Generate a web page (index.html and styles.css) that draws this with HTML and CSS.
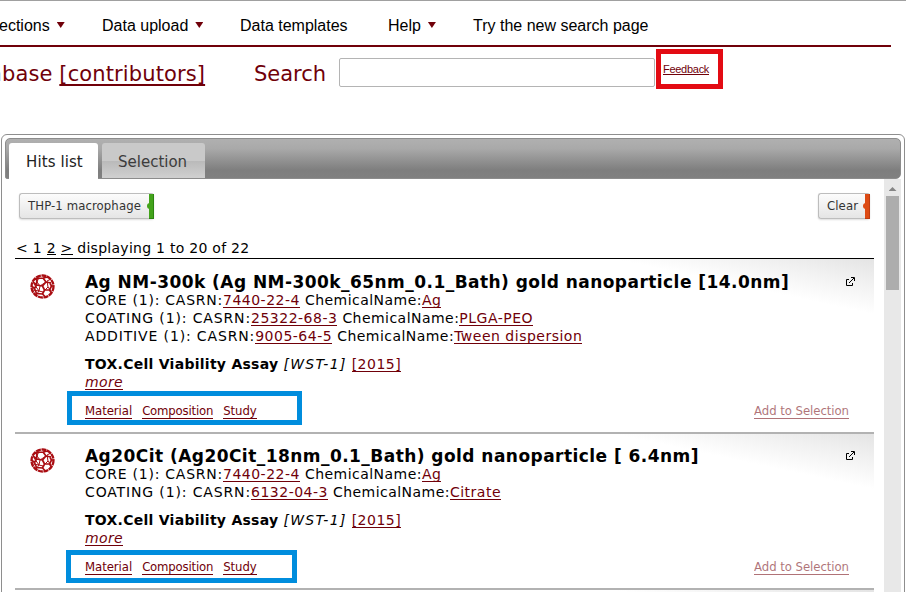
FILE: index.html
```
<!DOCTYPE html>
<html lang="en">
<head>
<meta charset="utf-8">
<title>Search</title>
<link rel="stylesheet" href="styles.css">
</head>
<body>
<svg width="0" height="0" class="defs">
  <symbol id="bucky" viewBox="0 0 25 25">
    <g fill="none" stroke="#a90d12" stroke-linejoin="round">
      <circle cx="12.5" cy="12.5" r="11" stroke-width="2.3" stroke-dasharray="5 .6"/>
      <path stroke-width="1.7" d="M7 4.5 13 4l3 4-3.500 4-6-1zM13 4l5-1M16 8l5 1M12.500 12l2 4 5 0 2-4-2-3.500M14.500 16l-2 4-6-.5-2-5 2-3.500M12.500 20l3 3M19.500 16l2 3M4.500 14.500 1.500 12M6.500 19.500 5 21M6.500 11 3 8M7 4.500 4 6M21.500 12h2"/>
      <path stroke-width="1" d="M9 3l-2 5 3 4-1 5 4 1 5-5-1-6 4-2M4 10l5 7-3 4M18 13l3 4M3 16l6 1M10 12l6-4"/>
    </g>
  </symbol>
  <symbol id="ext" viewBox="0 0 9 9">
    <path fill="none" stroke="#000" d="M3 2.500H.5v6h6V6M3 6l5-5M5 .5h3.500V4"/>
  </symbol>
</svg>

<div class="page">
  <nav class="nav">
    <a class="n1">ections<i></i></a>
    <a class="n2">Data upload<i></i></a>
    <a class="n3">Data templates</a>
    <a class="n4">Help<i></i></a>
    <a>Try the new search page</a>
  </nav>
  <header class="head">
    <div class="brand">abase <u>[contributors]</u></div>
    <label class="label">Search</label>
    <div class="input"></div>
    <div class="feedback"><u>Feedback</u></div>
  </header>

  <main class="panel">
    <div class="tabs">
      <div class="tab active">Hits list</div>
      <div class="tab">Selection</div>
    </div>
    <div class="body">
      <div class="content">
        <div class="filters">
          <div class="pill green">THP-1 macrophage</div>
          <div class="pill red">Clear</div>
        </div>
        <div class="pager">&lt; 1 <u>2</u> <u>&gt;</u> displaying 1 to 20 of 22</div>

        <article class="item first">
          <svg class="bucky"><use href="#bucky"/></svg>
          <div class="info">
            <h2>Ag NM-300k (Ag NM-300k_65nm_0.1_Bath) gold nanoparticle [14.0nm]</h2>
            <div class="row"><b>CORE (1): CASRN:</b><u>7440-22-4</u><span>ChemicalName:</span><u>Ag</u></div>
            <div class="row"><b class="wide">COATING (1): CASRN:</b><u>25322-68-3</u><span>ChemicalName:</span><u>PLGA-PEO</u></div>
            <div class="row"><b class="wide">ADDITIVE (1): CASRN:</b><u>9005-64-5</u><span>ChemicalName:</span><u>Tween dispersion</u></div>
            <div class="study"><strong>TOX.Cell Viability Assay</strong><em>[WST-1]</em><u>[2015]</u></div>
            <div class="more"><u>more</u></div>
            <div class="links"><u>Material</u><u class="comp">Composition</u><u>Study</u><u class="add">Add to Selection</u></div>
          </div>
          <svg class="ext"><use href="#ext"/></svg>
          <div class="mark m1"></div>
        </article>

        <article class="item">
          <svg class="bucky"><use href="#bucky"/></svg>
          <div class="info">
            <h2>Ag20Cit (Ag20Cit_18nm_0.1_Bath) gold nanoparticle [ 6.4nm]</h2>
            <div class="row"><b>CORE (1): CASRN:</b><u>7440-22-4</u><span>ChemicalName:</span><u>Ag</u></div>
            <div class="row"><b class="wide">COATING (1): CASRN:</b><u>6132-04-3</u><span>ChemicalName:</span><u>Citrate</u></div>
            <div class="study"><strong>TOX.Cell Viability Assay</strong><em>[WST-1]</em><u>[2015]</u></div>
            <div class="more"><u>more</u></div>
            <div class="links"><u>Material</u><u class="comp">Composition</u><u>Study</u><u class="add">Add to Selection</u></div>
          </div>
          <svg class="ext"><use href="#ext"/></svg>
          <div class="mark m2"></div>
        </article>
        <article class="item"></article>
      </div>
      <div class="scroll"><span class="up"></span><div class="thumb"></div></div>
    </div>
  </main>
</div>
</body>
</html>
```
FILE: styles.css
```
* { box-sizing: border-box; }
body { margin: 0; background: #fff; overflow: hidden; }
.defs { display: none; }
.page {
  height: 592px;
  overflow: hidden;
  border-top: 1px solid #a0a0a0;
  font-family: "DejaVu Sans", Verdana, sans-serif;
  color: #000;
}
u { color: #700009; text-decoration: none; border-bottom: 1px solid #700009; }

.nav {
  display: flex;
  width: 891px;
  height: 46px;
  padding-top: 16px;
  border-bottom: 2px solid #700009;
  font: 16px/18px "Liberation Sans", Arial, sans-serif;
  white-space: nowrap;
}
.nav a { display: flex; flex: none; }
.nav i {
  margin: 5px 0 0 7px;
  width: 8px;
  height: 6px;
  background: #700009;
  clip-path: polygon(0 0, 100% 0, 50% 100%);
}
.n1 { width: 103px; margin-left: -1px; }
.n2 { width: 138px; }
.n3 { width: 148px; }
.n4 { width: 85px; }

.head {
  display: flex;
  height: 87px;
  padding-top: 2px;
  color: #700009;
  font-size: 21px;
  line-height: 24px;
  white-space: nowrap;
}
.brand { flex: none; width: 265px; margin: 13px 0 0 -11px; letter-spacing: .12px; }
.brand u {
  border: 0;
  text-decoration: underline;
  text-decoration-thickness: 2px;
  text-underline-offset: 3px;
  text-decoration-skip-ink: none;
}
.label { width: 85px; margin-top: 13px; }
.input { flex: none; width: 316px; height: 29px; margin-top: 9px; border: 1px solid #b4b4b4; border-radius: 2px; }
.feedback {
  flex: none;
  width: 67px;
  height: 40px;
  margin-left: 1px;
  padding: 9px 0 0 2px;
  border: 5px solid #e30b13;
  font: 11px/12px "Liberation Sans", Arial, sans-serif;
  letter-spacing: -.28px;
}
.feedback u { display: inline-block; height: 12px; }

.panel { width: 904px; height: 470px; margin-left: 1px; padding: 3px; border: 1px solid #8e8e8e; border-radius: 6px; }
.tabs {
  display: flex;
  width: 896px;
  height: 41px;
  padding: 4px 3px 0;
  border: 1px solid #8c8c8c;
  border-radius: 5px;
  border-bottom-left-radius: 2px;
  background: linear-gradient(#b0b0b0 0%, #a9a9a9 25%, #7e7e7e 80%, #808080);
}
.tab {
  width: 103px;
  height: 35px;
  padding: 9px 0 0 16px;
  border-radius: 3px 3px 0 0;
  background: linear-gradient(#c9c9c9 0 50%, #b9b9b9 50%, #d0d0d0);
  color: #3c3c3c;
  font-size: 15px;
  line-height: 20px;
}
.tab.active { width: 89px; height: 37px; padding-left: 17px; margin-right: 4px; background: #fff; color: #222; letter-spacing: .1px; }

.body { display: flex; justify-content: space-between; height: 430px; }
.content { width: 859px; margin-left: 10px; padding-top: 14px; }
.filters { display: flex; justify-content: space-between; padding: 0 4px; height: 45px; }
.pill {
  position: relative;
  width: 135px;
  height: 26px;
  padding-left: 8px;
  border: 1px solid #bdbdbd;
  border-right: 0;
  border-radius: 3px;
  background: linear-gradient(#fcfcfc, #e5e5e5);
  box-shadow: 0 1px 2px #ddd;
  color: #333;
  font: 13px/23px "DejaVu Sans Condensed", "DejaVu Sans", sans-serif;
  letter-spacing: .1px;
}
.pill::before, .pill::after { content: ""; position: absolute; background: #43a31b; }
.pill::before { top: 0; right: 0; width: 4px; height: 24px; border: 1px solid #2c8511; border-width: 0 1px 1px 0; }
.pill::after { top: 9px; right: 4px; width: 3px; height: 6px; border-radius: 3px 0 0 3px; }
.red { width: 52px; }
.red::before, .red::after { background: #dd4b14; }
.red::before { border-color: #bd3c10; }

.pager { height: 20px; padding-left: 1px; font-size: 14px; line-height: 20px; letter-spacing: .27px; white-space: pre; }
.pager u { color: #000; border-color: #000; display: inline-block; height: 17px; line-height: 20px; }

.item {
  position: relative;
  display: flex;
  height: 156px;
  padding: 13px 0 0 15px;
  border-top: 2px solid #b2b2b2;
  background: linear-gradient(192deg, #e4e4e4 0, #f1f1f1 25px, #fff 54px);
}
.item.first { height: 174px; padding-top: 14px; border-top: 1px solid #000; }
.bucky { flex: none; width: 25px; height: 25px; margin-top: 1px; }
.info { width: 764px; margin-left: 30px; }
h2 { height: 18px; margin: 0; font-size: 17px; line-height: 18px; letter-spacing: .45px; white-space: pre; }
.row, .study { display: flex; height: 18px; font-size: 14px; line-height: 18px; letter-spacing: .5px; white-space: nowrap; }
.row b { font-weight: 400; letter-spacing: .75px; }
.row b.wide { letter-spacing: .86px; }
.row u, .study u, .more u { height: 17px; }
.row span { margin-left: 5px; letter-spacing: .46px; }
.study { margin-top: 10px; }
.study strong { letter-spacing: .27px; }
.study em { margin: 0 5px; letter-spacing: 1.3px; }
.more { display: flex; height: 18px; font-size: 14px; line-height: 18px; font-style: italic; letter-spacing: .35px; }
.links {
  display: flex;
  gap: 10px;
  margin-top: 12px;
  height: 16px;
  font: 13px/16px "DejaVu Sans Condensed", "DejaVu Sans", sans-serif;
  letter-spacing: -.05px;
}
.comp { letter-spacing: -.18px; }
.add { margin-left: auto; opacity: .55; }
.ext { position: absolute; right: 19px; top: 18px; width: 9px; height: 9px; }
.item:not(.first) .ext { top: 17px; }
.mark { position: absolute; border: 5px solid #008ddd; }
.m1 { left: 52px; top: 132px; width: 235px; height: 34px; }
.m2 { left: 51px; top: 116px; width: 231px; height: 33px; }

.scroll { width: 17px; height: 430px; background: #e8e8e8; padding: 8px 2px 0; }
.up { display: block; width: 8px; height: 4px; margin: 0 auto 5px; background: #858585; clip-path: polygon(50% 0, 100% 100%, 0 100%); }
.thumb { height: 94px; background: #adadad; }
```
